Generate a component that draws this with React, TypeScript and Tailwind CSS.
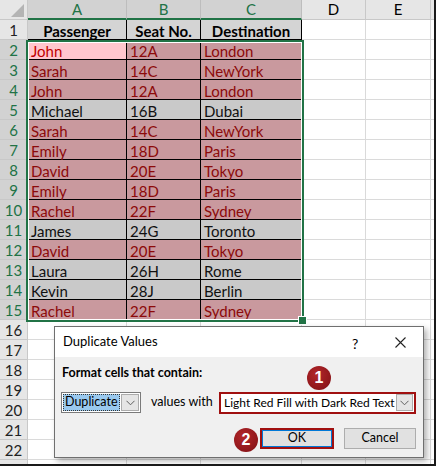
import React from 'react';

type Row = [string, string, string, number];
const rows: Row[] = [
  ['John', '12A', 'London', 1],
  ['Sarah', '14C', 'NewYork', 1],
  ['John', '12A', 'London', 1],
  ['Michael', '16B', 'Dubai', 0],
  ['Sarah', '14C', 'NewYork', 1],
  ['Emily', '18D', 'Paris', 1],
  ['David', '20E', 'Tokyo', 1],
  ['Emily', '18D', 'Paris', 1],
  ['Rachel', '22F', 'Sydney', 1],
  ['James', '24G', 'Toronto', 0],
  ['David', '20E', 'Tokyo', 1],
  ['Laura', '26H', 'Rome', 0],
  ['Kevin', '28J', 'Berlin', 0],
  ['Rachel', '22F', 'Sydney', 1],
];

const Chevron = () => (
  <svg width="9" height="6" viewBox="0 0 9 6" fill="none">
    <path d="M0.5 0.8 L4.5 4.8 L8.5 0.8" stroke="#606060" strokeWidth="1" />
  </svg>
);

function RowHeader({ n, sel }: { n: number; sel?: boolean }) {
  return (
    <div
      className={
        'w-[28px] h-[20px] shrink-0 flex items-center justify-center border-b border-r border-[#c8c8c8] text-[15px] leading-none pt-[1px] ' +
        (sel ? 'bg-[#d2d2d2] text-[#217346]' : 'bg-[#e6e6e6] text-[#222]')
      }
    >
      {n}
    </div>
  );
}

function GridCells() {
  return (
    <>
      <div className="w-[64px] h-[20px] shrink-0 border-r border-b border-[#dadada]" />
      <div className="w-[65px] h-[20px] shrink-0 border-r border-b border-[#dadada]" />
      <div className="w-[5px] h-[20px] shrink-0 border-b border-[#dadada]" />
    </>
  );
}

export default function App() {
  return (
    <div className="relative w-[436px] h-[466px] overflow-hidden bg-white font-['Lato',sans-serif] text-black">
      {/* column header */}
      <div className="flex h-[20px]">
        <div className="relative w-[28px] h-[20px] shrink-0 bg-[#e6e6e6] border-r border-b border-[#c8c8c8]">
          <svg className="absolute left-[11px] top-[4px]" width="13" height="13" viewBox="0 0 13 13">
            <path d="M13 0 L13 13 L0 13 Z" fill="#b4b4b4" />
          </svg>
        </div>
        {[
          ['A', 'w-[99px]'],
          ['B', 'w-[74px]'],
          ['C', 'w-[101px]'],
        ].map(([l, w]) => (
          <div
            key={l}
            className={`${w} h-[20px] shrink-0 bg-[#d2d2d2] border-r border-[#bdbdbd] border-b-2 border-b-[#217346] text-[#217346] text-[15px] flex items-center justify-center leading-none pt-[1px]`}
          >
            {l}
          </div>
        ))}
        <div className="w-[64px] h-[20px] shrink-0 bg-[#e6e6e6] border-r border-b border-[#c8c8c8] text-[15px] flex items-center justify-center leading-none">D</div>
        <div className="w-[65px] h-[20px] shrink-0 bg-[#e6e6e6] border-r border-b border-[#c8c8c8] text-[15px] flex items-center justify-center leading-none">E</div>
        <div className="w-[5px] h-[20px] shrink-0 bg-[#e6e6e6] border-b border-[#c8c8c8]" />
      </div>

      {/* row 1 */}
      <div className="flex h-[20px]">
        <RowHeader n={1} />
        {[
          ['Passenger', 'w-[99px]'],
          ['Seat No.', 'w-[74px]'],
          ['Destination', 'w-[101px]'],
        ].map(([t, w]) => (
          <div
            key={t}
            className={`${w} h-[20px] shrink-0 bg-[#d4d4d4] border-r border-b border-black font-bold text-[15px] leading-[20px] pt-[1px] text-center`}
          >
            {t}
          </div>
        ))}
        <GridCells />
      </div>

      {/* data rows */}
      {rows.map((r, i) => {
        const dup = r[3] === 1;
        return (
          <div key={i} className="flex h-[20px]">
            <RowHeader n={i + 2} sel />
            {[r[0], r[1], r[2]].map((t, j) => {
              const active = i === 0 && j === 0;
              const w = j === 0 ? 'w-[99px]' : j === 1 ? 'w-[74px]' : 'w-[101px]';
              const bg = active
                ? 'bg-[#ffc7ce] text-[#c00000]'
                : dup
                ? 'bg-[#c9999e] text-[#8c0a0a]'
                : 'bg-[#c9c9c9] text-[#111]';
              return (
                <div
                  key={j}
                  className={`${w} ${bg} h-[20px] shrink-0 border-r border-b border-black text-[15px] leading-[20px] pt-[1px] pl-[3px]`}
                >
                  {t}
                </div>
              );
            })}
            <GridCells />
          </div>
        );
      })}

      {/* empty rows */}
      {[16, 17, 18, 19, 20, 21, 22].map((n) => (
        <div key={n} className="flex h-[20px]">
          <RowHeader n={n} />
          <div className="w-[99px] h-[20px] shrink-0 border-r border-b border-[#dadada]" />
          <div className="w-[74px] h-[20px] shrink-0 border-r border-b border-[#dadada]" />
          <div className="w-[101px] h-[20px] shrink-0 border-r border-b border-[#dadada]" />
          <GridCells />
        </div>
      ))}
      <div className="flex h-[6px]">
        <div className="w-[28px] h-[6px] bg-[#e6e6e6] border-r border-[#c8c8c8]" />
        <div className="w-[99px] h-[6px] border-r border-[#dadada]" />
        <div className="w-[74px] h-[6px] border-r border-[#dadada]" />
        <div className="w-[101px] h-[6px] border-r border-[#dadada]" />
        <div className="w-[64px] h-[6px] border-r border-[#dadada]" />
        <div className="w-[65px] h-[6px] border-r border-[#dadada]" />
      </div>

      {/* selection border */}
      <div className="absolute left-[26px] top-[40px] w-[278px] h-[282px] border-2 border-[#217346] shadow-[inset_0_0_0_1px_white] pointer-events-none" />
      <div className="absolute left-[299px] top-[317px] w-[7px] h-[7px] bg-[#217346] outline outline-1 outline-white" />

      {/* dialog */}
      <div className="absolute left-[54px] top-[326px] w-[370px] h-[132px] border border-[#6f6f6f] bg-[#f0f0f0] shadow-[3px_3px_6px_rgba(0,0,0,0.3)] font-['Lato',sans-serif] text-[12px]">
        <div className="h-[30px] bg-white flex items-center pl-[8px] relative">
          <span className="text-[13px]">Duplicate Values</span>
          <span className="absolute left-[297px] top-[6px] text-[14px]">?</span>
          <svg className="absolute left-[340px] top-[10px]" width="11" height="11" viewBox="0 0 11 11">
            <path d="M0.5 0.5 L10.5 10.5 M10.5 0.5 L0.5 10.5" stroke="#222" strokeWidth="1.1" />
          </svg>
        </div>
        <div className="pl-[7px] pt-[8px] font-bold text-[12.5px] leading-[16px]">Format cells that contain:</div>
        <div className="flex items-center mt-[11px] pl-[6px] h-[21px] whitespace-nowrap">
          <div className="w-[80px] h-[21px] shrink-0 border border-[#7a7a7a] bg-white flex items-center pl-[1px] pr-[1px] gap-[1px]">
            <div className="w-[58px] h-[17px] bg-[#99c9ef] border border-dotted border-[#333] flex items-center pl-[1px] leading-none text-[12.5px]">
              Duplicate
            </div>
            <div className="w-[18px] h-[17px] bg-[#e5e5e5] border border-[#acacac] flex items-center justify-center">
              <Chevron />
            </div>
          </div>
          <span className="ml-[10px] w-[58px] shrink-0 text-[12.5px]">values with</span>
          <div className="ml-[10px] w-[197px] h-[22px] shrink-0 border-2 border-[#a01010] bg-white flex items-center pl-[3px] pr-[1px]">
            <span className="flex-1 leading-none text-[12px]">Light Red Fill with Dark Red Text</span>
            <div className="w-[17px] h-[17px] bg-[#e5e5e5] border border-[#acacac] flex items-center justify-center">
              <Chevron />
            </div>
          </div>
        </div>
        <div className="flex mt-[15px] pl-[205px] gap-[10px] text-[12.5px]">
          <div className="w-[74px] h-[21px] border-2 border-[#a01010] flex">
            <div className="flex-1 border border-[#0078d7] bg-[#e1e1e1] flex items-center justify-center leading-none">OK</div>
          </div>
          <div className="w-[72px] h-[21px] border border-[#adadad] bg-[#e1e1e1] flex items-center justify-center leading-none">Cancel</div>
        </div>

        {/* badges */}
        <div className="absolute left-[252px] top-[39px] w-[24px] h-[24px] rounded-full bg-[radial-gradient(circle_at_40%_35%,#b3262a,#7e1014)] text-white font-bold text-[16px] flex items-center justify-center leading-none font-['Liberation_Sans',sans-serif]">1</div>
        <div className="absolute left-[179px] top-[101px] w-[24px] h-[24px] rounded-full bg-[radial-gradient(circle_at_40%_35%,#b3262a,#7e1014)] text-white font-bold text-[16px] flex items-center justify-center leading-none font-['Liberation_Sans',sans-serif]">2</div>
      </div>

      {/* outer frame right/bottom */}
      <div className="absolute right-0 top-0 w-[2px] h-full bg-[#1a1a1a]" />
      <div className="absolute left-0 bottom-0 h-[2px] w-full bg-[#1a1a1a]" />
    </div>
  );
}
